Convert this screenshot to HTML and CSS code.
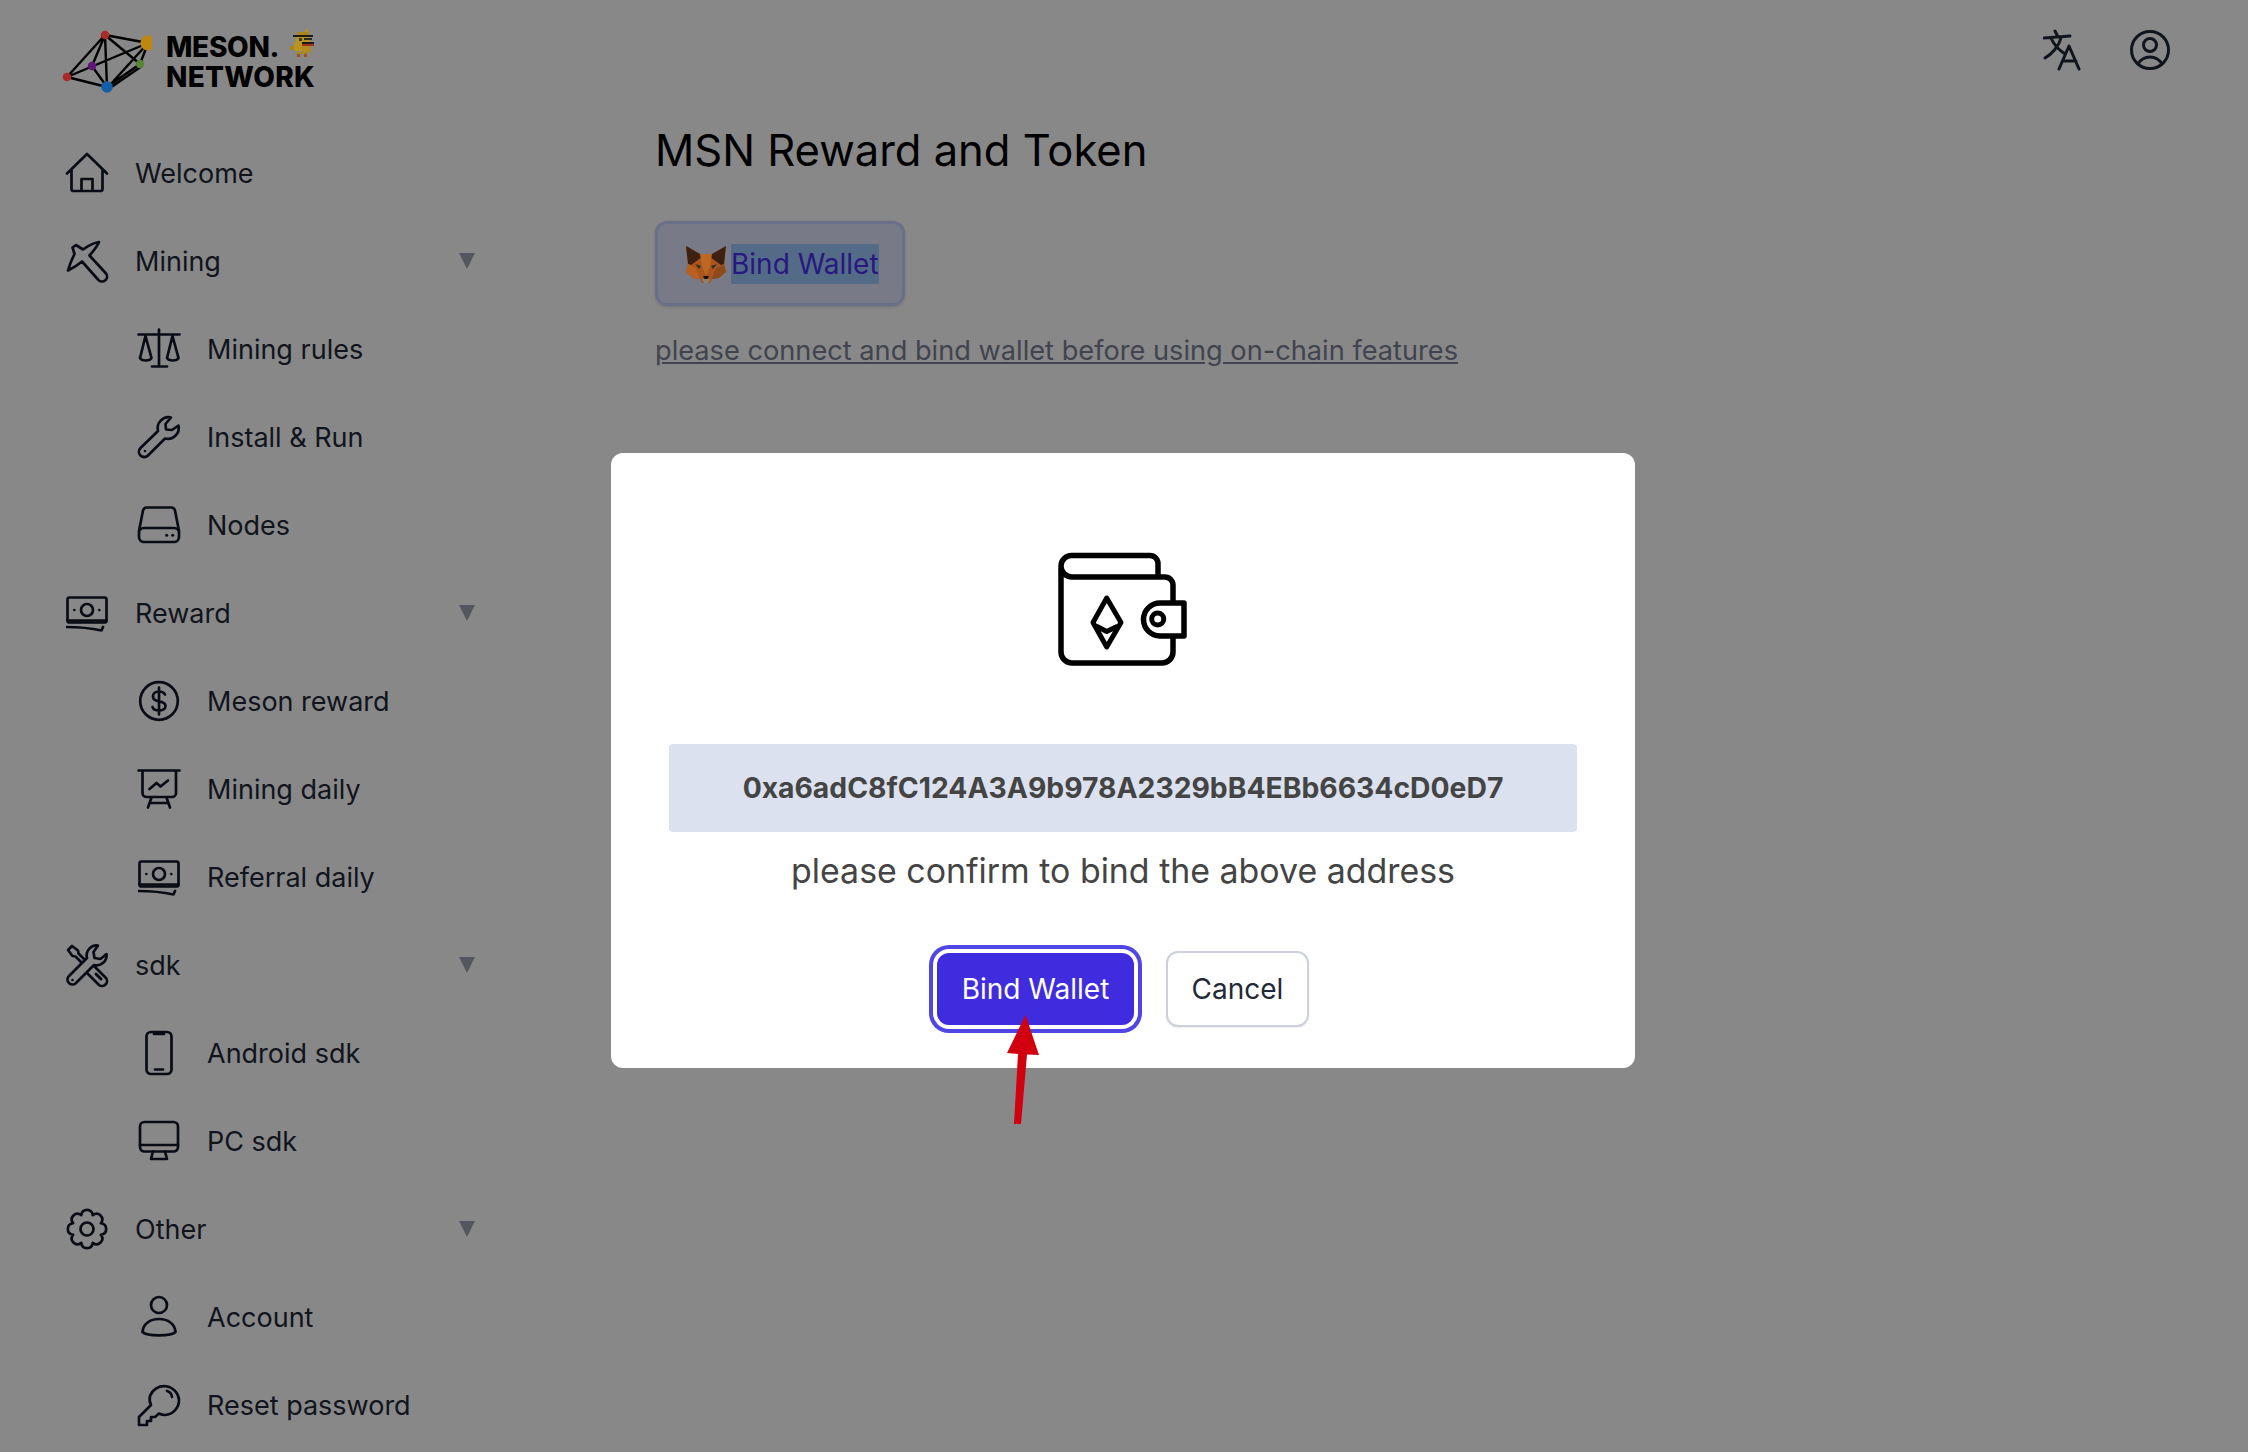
FILE: index.html
```html
<!DOCTYPE html>
<html lang="en">
<head>
<meta charset="utf-8">
<title>MSN Reward and Token</title>
<link rel="stylesheet" href="styles.css">
</head>
<body>
<div class="app">
  <aside class="sidebar">
    <div class="logo">
      <svg class="logo-mark" width="92" height="68" viewBox="0 0 92 68">
        <g class="logo-lines">
          <path d="M45 9L88 17M45 9L80 38M45 9L32 40M45 9L7 51M45 9L47 61M88 17L7 51M88 17L50 59M88 17L80 38M80 38L47 61M82 40L50 62M32 40L47 61M7 51L47 61"/>
        </g>
        <circle class="dot-red" cx="45" cy="9" r="4.300"/>
        <circle class="dot-gold" cx="88" cy="17" r="7.600"/>
        <circle class="dot-green" cx="80" cy="38" r="4.200"/>
        <circle class="dot-purple" cx="32" cy="40" r="4.200"/>
        <circle class="dot-red" cx="7" cy="51" r="4.300"/>
        <circle class="dot-blue" cx="47" cy="61" r="5.800"/>
      </svg>
      <div class="logo-text">
        <div class="logo-line">
          <span class="logo-meson">MESON.</span>
          <svg class="duck" width="24" height="28" viewBox="0 0 24 28" shape-rendering="crispEdges">
            <rect x="15" y="0" width="3" height="3" fill="#b99320"/>
            <rect x="7" y="3" width="12" height="3" fill="#a8861c"/>
            <rect x="3" y="6" width="20" height="2" fill="#1c1c1c"/>
            <rect x="6" y="8" width="14" height="5" fill="#b99320"/>
            <rect x="9" y="9" width="3" height="3" fill="#3c3a2c"/>
            <rect x="14" y="9" width="8" height="2" fill="#2a2a24"/>
            <rect x="12" y="13" width="12" height="2" fill="#1c1c1c"/>
            <rect x="12" y="15" width="12" height="2" fill="#a8301a"/>
            <rect x="4" y="13" width="8" height="9" fill="#b99320"/>
            <rect x="12" y="17" width="9" height="6" fill="#b08b1e"/>
            <rect x="0" y="17" width="4" height="4" fill="#a8861c"/>
            <rect x="7" y="23" width="10" height="2" fill="#a8861c"/>
            <rect x="7" y="25" width="3" height="3" fill="#a0521c"/>
            <rect x="14" y="25" width="3" height="3" fill="#a0521c"/>
          </svg>
        </div>
        <div class="logo-line logo-network">NETWORK</div>
      </div>
    </div>
    <nav class="nav">
      <a class="nav-item">
        <svg class="ico" viewBox="0 0 42 42"><path d="M1 21.500L21 2L41 21.500M5.500 17.500V37a2 2 0 0 0 2 2H34.500a2 2 0 0 0 2-2V17.500M15.500 39V27H26.500V39"/></svg>
        <span class="label">Welcome</span>
      </a>
      <a class="nav-item">
        <svg class="ico" viewBox="0 0 42 42"><path d="M33 2C27 3 22 6 17 9.500L10 5L6.500 7.500L8.500 14C6 19 3.500 25 2 30.500C7 28 12 25 16 21.500L32 39.500a3.500 3.500 0 0 0 8-6L23.500 15.500C27.500 11 31 7 33 2Z"/></svg>
        <span class="label">Mining</span><i class="caret"></i>
      </a>
      <a class="nav-item sub">
        <svg class="ico" viewBox="0 0 42 42"><path d="M0.500 6.500H41.500M21 1.500V38.500M14 38.500H29M7.500 8L2 30a6 3.500 0 0 0 11.500 0ZM34.500 8L29 30a6 3.500 0 0 0 11.500 0Z"/></svg>
        <span class="label">Mining rules</span>
      </a>
      <a class="nav-item sub">
        <svg class="ico" viewBox="0 0 42 42"><path d="M33 1.500a11 11 0 0 0-13 13.500L2.500 32a5 5 0 0 0 7.500 7.500L27 22.500a11 11 0 0 0 13.500-13L34 14L28 13.500L27.500 8Z"/><circle class="ico-dot" cx="7" cy="35" r="1.300"/></svg>
        <span class="label">Install &amp; Run</span>
      </a>
      <a class="nav-item sub">
        <svg class="ico" viewBox="0 0 42 42"><path d="M9 3.500H33a4 4 0 0 1 4 3L41 27V33a5 5 0 0 1-5 5H6a5 5 0 0 1-5-5V27L5 6.500a4 4 0 0 1 4-3ZM1 29a5 5 0 0 1 5-5H36a5 5 0 0 1 5 5"/><circle class="ico-dot" cx="28.700" cy="31.300" r="1.500"/><circle class="ico-dot" cx="34.700" cy="31.300" r="1.500"/></svg>
        <span class="label">Nodes</span>
      </a>
      <a class="nav-item">
        <svg class="ico" viewBox="0 0 42 42"><use href="#money"/></svg>
        <span class="label">Reward</span><i class="caret"></i>
      </a>
      <a class="nav-item sub">
        <svg class="ico" viewBox="0 0 42 42"><circle cx="21" cy="21" r="18.800"/><path d="M27 14.500C26 12.500 24 11.500 21 11.500C17.500 11.500 15 13.500 15 16.500C15 20 18 20.800 21 21.300C24 21.800 27.500 22.700 27.500 26C27.500 29 24.500 30.500 21 30.500C17.500 30.500 15 29 14.500 27M21 7.500V34.500"/></svg>
        <span class="label">Meson reward</span>
      </a>
      <a class="nav-item sub">
        <svg class="ico" viewBox="0 0 42 42"><path d="M0.500 2.500H41.500M4.500 3V25a4 4 0 0 0 4 4H34a4 4 0 0 0 4-4V3M13.500 29.500L10 39.500M28.500 29.500L32 39.500M12 35H30M11.500 21L18.500 15L22.500 18.500L30 12.500"/></svg>
        <span class="label">Mining daily</span>
      </a>
      <a class="nav-item sub">
        <svg class="ico" viewBox="0 0 42 42"><use href="#money"/></svg>
        <span class="label">Referral daily</span>
      </a>
      <a class="nav-item">
        <svg class="ico" viewBox="0 0 42 42"><path d="M2 6L6 2L12 6.500L12.500 9.500L22 19M2 6L6.500 12L9.500 12.500L19 22M26 20L40 34a5 5 0 0 1-7 7L19 27Z"/><path class="ico-thin" d="M30 30L35 35"/><path class="ico-mask" d="M32 1.500a10 10 0 0 0-11 12.500L2.500 32.500a5 5 0 0 0 7 7L28 21a10 10 0 0 0 12.500-11L34.500 15L28.500 14L27.500 8Z"/><circle class="ico-dot" cx="6.500" cy="36" r="1.300"/></svg>
        <span class="label">sdk</span><i class="caret"></i>
      </a>
      <a class="nav-item sub">
        <svg class="ico" viewBox="0 0 42 42"><rect x="8.500" y="0" width="25" height="42" rx="4.500"/><path d="M16 2H26M17 37.500H25"/></svg>
        <span class="label">Android sdk</span>
      </a>
      <a class="nav-item sub">
        <svg class="ico" viewBox="0 0 42 42"><rect x="2" y="2" width="38" height="29.500" rx="4.500"/><path d="M2 25H40M15 31.500L13 39H29L27 31.500"/></svg>
        <span class="label">PC sdk</span>
      </a>
      <a class="nav-item">
        <svg class="ico" viewBox="0 0 42 42"><path d="M15.260 7.140C16.160 0.050 25.840 0.050 26.740 7.140C32.390 2.770 39.230 9.610 34.860 15.260C41.950 16.160 41.950 25.840 34.860 26.740C39.230 32.390 32.390 39.230 26.740 34.860C25.840 41.950 16.160 41.950 15.260 34.860C9.610 39.230 2.770 32.390 7.140 26.740C0.050 25.840 0.050 16.160 7.140 15.260C2.770 9.610 9.610 2.770 15.260 7.140Z"/><circle cx="21" cy="21" r="6.500"/></svg>
        <span class="label">Other</span><i class="caret"></i>
      </a>
      <a class="nav-item sub">
        <svg class="ico" viewBox="0 0 42 42"><circle cx="21" cy="9" r="8"/><path d="M4.500 36C5 28 12 23 21 23C30 23 37 28 37.500 36C33 40.500 9 40.500 4.500 36Z"/></svg>
        <span class="label">Account</span>
      </a>
      <a class="nav-item sub">
        <svg class="ico" viewBox="0 0 42 42"><path d="M41 15.500A15 15 0 0 0 12 12C11 16 12 19 13 21L1 33V41H9V37H13V33H17L21 29.500C23 30.500 25 31 27 31A15 15 0 0 0 41 15.500ZM29 7a7 7 0 0 1 5 6"/></svg>
        <span class="label">Reset password</span>
      </a>
    </nav>
  </aside>

  <main class="main">
    <div class="topbar">
      <svg class="top-ico" width="42" height="42" viewBox="0 0 42 42"><path d="M1 9L27 7M12 2L15 8M8 9C11 16 16 21 22 25M18 9C16 17 9 25 2 29M16 40L26 17L36 40M20 32H33"/></svg>
      <svg class="top-ico" width="42" height="42" viewBox="0 0 42 42"><circle cx="21" cy="21" r="18.500"/><circle cx="21" cy="16" r="6.500"/><path d="M9 35C12 30 16 28 21 28C26 28 30 30 33 35"/></svg>
    </div>
    <h1 class="title">MSN Reward and Token</h1>
    <button class="wallet-btn" type="button">
      <svg class="fox" width="40" height="40" viewBox="0 0 40 40">
        <path d="M0 2L14 10H26L40 2L38 20L40 28L33 34L26 35L24 39H16L14 35L7 34L0 28L2 20Z" fill="#a8561e"/>
        <path d="M0 2L14 10L16 13L5 21L2 20Z" fill="#3e2011"/>
        <path d="M40 2L26 10L24 13L35 21L38 20Z" fill="#3e2011"/>
        <path d="M0 28L7 34L14 35L10 24L2 20Z" fill="#b8601f"/>
        <path d="M40 28L33 34L26 35L30 24L38 20Z" fill="#8f4a1c"/>
        <path d="M14 10H26L24 22L20 32L16 22Z" fill="#bd6822"/>
        <path d="M9 20L15 22L13 25ZM31 20L25 22L27 25Z" fill="#30302a"/>
        <path d="M16 35H24L22 39H18Z" fill="#8a8272"/>
        <path d="M17 32H23L21.500 35H18.500Z" fill="#111"/>
      </svg>
      <span class="selected">Bind Wallet</span>
    </button>
    <p class="hint"><a class="hint-link">please connect and bind wallet before using on-chain features</a></p>
  </main>
</div>

<svg class="defs" width="0" height="0">
  <symbol id="money" viewBox="0 0 42 42">
    <rect x="1.500" y="5.500" width="39" height="25" rx="2" />
    <path d="M1.500 28.500H40.500M0.500 35C12 35 24 36 35.500 38.500L37 35"/>
    <circle cx="21" cy="18" r="6"/>
    <circle class="ico-dot" cx="8.300" cy="18" r="1.300"/>
    <circle class="ico-dot" cx="33.300" cy="18" r="1.300"/>
  </symbol>
</svg>

<div class="modal">
  <div class="dialog">
    <svg class="wallet-art" width="140" height="120" viewBox="53 30 140 120">
      <path class="wallet-stroke" d="M61 48V132a11 11 0 0 0 11 11H162a11 11 0 0 0 11-11V118M173 81V65a8 8 0 0 0-8-8H72a11 11 0 0 1-11-11a10.500 10.500 0 0 1 11-10.500H150a8 8 0 0 1 8 8V57M184 83H160a16.500 16.500 0 0 0 0 33H184Z"/>
      <circle class="wallet-stroke thin" cx="157.700" cy="99" r="6"/>
      <path class="wallet-stroke thin" d="M106.700 78L93 102.500L106.700 127L121 102.500ZM97 106.500L106.700 111.500L117 106.500"/>
    </svg>
    <div class="address">0xa6adC8fC124A3A9b978A2329bB4EBb6634cD0eD7</div>
    <p class="confirm">please confirm to bind the above address</p>
    <div class="actions">
      <button class="btn btn-primary" type="button">Bind Wallet</button>
      <button class="btn btn-cancel" type="button">Cancel</button>
    </div>
  </div>
  <svg class="pointer" width="40" height="112" viewBox="1003 1014 40 112">
    <path d="M1025.500 1015L1007 1053L1018 1054L1014 1124H1021L1027 1054.500L1039 1055Z"/>
  </svg>
</div>
</body>
</html>
```
FILE: styles.css
```css
* { box-sizing: border-box; }
html, body { margin: 0; height: 100%; }
body {
  background: #fff;
  color: #1f2937;
  font-family: "Inter", "Liberation Sans", sans-serif;
  overflow: hidden;
}
.app {
  display: grid;
  grid-template-columns: 655px 1fr;
  height: 100vh;
  overflow: hidden;
}

/* sidebar */
.sidebar { display: flex; flex-direction: column; }
.logo {
  display: flex;
  align-items: flex-start;
  gap: 14px;
  height: 129px;
  padding: 26px 0 0 60px;
}
/* the brand colours stay vivid through the dimming layer */
.logo-mark, .duck, .fox { position: relative; z-index: 2; }
.logo-mark { flex: none; }
.logo-lines path { fill: none; stroke: #000; stroke-width: 2.400; }
.dot-red { fill: #aa2a2a; }
.dot-gold { fill: #be870f; }
.dot-green { fill: #558732; }
.dot-purple { fill: #641478; }
.dot-blue { fill: #145faa; }
.logo-text {
  margin-top: 6px;
  font-size: 28px;
  font-weight: 800;
  line-height: 30px;
  color: #000;
}
.logo-line { display: flex; align-items: flex-start; gap: 11px; }
.logo-meson { letter-spacing: -.3px; }
.logo-network { letter-spacing: .3px; }
.duck { flex: none; margin-top: -3px; }

.nav { display: flex; flex-direction: column; padding-left: 66px; width: 484px; }
.nav-item {
  display: flex;
  align-items: center;
  gap: 27px;
  height: 88px;
  font-size: 27px;
  color: #1f2937;
}
.nav-item.sub { padding-left: 72px; }
.label { flex: 1; padding-top: 1px; }
.caret {
  width: 0;
  height: 0;
  margin: 0 9px 0 0;
  border-left: 8.500px solid transparent;
  border-right: 8.500px solid transparent;
  border-top: 16px solid #9ca3af;
}
.ico {
  flex: none;
  width: 42px;
  height: 42px;
  overflow: visible;
  fill: none;
  stroke: #111827;
  stroke-width: 2.700;
  stroke-linecap: round;
  stroke-linejoin: round;
}
.ico-dot { fill: #111827; stroke: none; }
.ico-thin { stroke-width: 3; }
.ico-mask { fill: #fff; }
.defs { position: absolute; }

/* main */
.main { display: flex; flex-direction: column; align-items: flex-start; padding-right: 77px; }
.topbar {
  display: flex;
  justify-content: flex-end;
  align-self: stretch;
  align-items: flex-start;
  gap: 44px;
  height: 120px;
  padding-top: 29px;
}
.top-ico {
  fill: none;
  stroke: #1f2937;
  stroke-width: 3;
  stroke-linecap: round;
  stroke-linejoin: round;
}
.title {
  margin: 0;
  font-size: 43.500px;
  font-weight: 400;
  line-height: 60px;
  color: #000;
}
.wallet-btn {
  display: flex;
  align-items: center;
  gap: 5px;
  width: 250px;
  height: 85px;
  margin-top: 41px;
  padding: 0 0 0 28px;
  background: #e1e6fd;
  border: 3px solid #c7d2fe;
  border-radius: 12px;
  box-shadow: 0 1px 3px rgba(0, 0, 0, .15);
  font: inherit;
  font-size: 28px;
  color: #4a2ff0;
}
.fox { flex: none; }
.selected { background: #9dc8ff; line-height: 40px; }
.hint { margin: 26px 0 0; font-size: 27.200px; line-height: 38px; }
.hint-link { color: #7b7f92; text-decoration: underline; }

/* modal */
.modal {
  position: fixed;
  inset: 0;
  z-index: 1;
  display: flex;
  justify-content: center;
  align-items: flex-start;
  padding-top: 453px;
  background: rgba(0, 0, 0, .466);
}
.dialog {
  display: flex;
  flex-direction: column;
  align-items: center;
  width: 1024px;
  margin-left: -2px;
  padding: 97px 58px 41px;
  background: #fff;
  border-radius: 12px;
}
.wallet-art { display: block; }
.wallet-stroke {
  fill: none;
  stroke: #000;
  stroke-width: 5.500;
  stroke-linecap: round;
  stroke-linejoin: round;
}
.wallet-stroke.thin { stroke-width: 5; }
.address {
  align-self: stretch;
  height: 88px;
  margin-top: 74px;
  background: #dbe1ee;
  border-radius: 4px;
  font-size: 28.300px;
  font-weight: 700;
  line-height: 88px;
  text-align: center;
  color: #444;
}
.confirm {
  margin: 12px 0 0;
  font-size: 33.900px;
  line-height: 54px;
  color: #444;
}
.actions {
  display: flex;
  align-items: center;
  justify-content: center;
  gap: 32px;
  margin-top: 53px;
}
.btn {
  font: inherit;
  font-size: 28px;
  border-radius: 12px;
}
.btn-primary {
  width: 197px;
  height: 72px;
  padding: 0;
  color: #fff;
  background: #3f2cdf;
  border: 0;
  box-shadow: 0 0 0 4px #fff, 0 0 0 8px #4f46e5;
}
.btn-cancel {
  width: 143px;
  height: 76px;
  padding: 0;
  color: #1f2937;
  background: #fff;
  border: 2px solid #cbd0dc;
  box-shadow: 0 1px 2px rgba(0, 0, 0, .08);
}
.pointer {
  position: absolute;
  left: 1003px;
  top: 1014px;
  fill: #d0000f;
}
```
